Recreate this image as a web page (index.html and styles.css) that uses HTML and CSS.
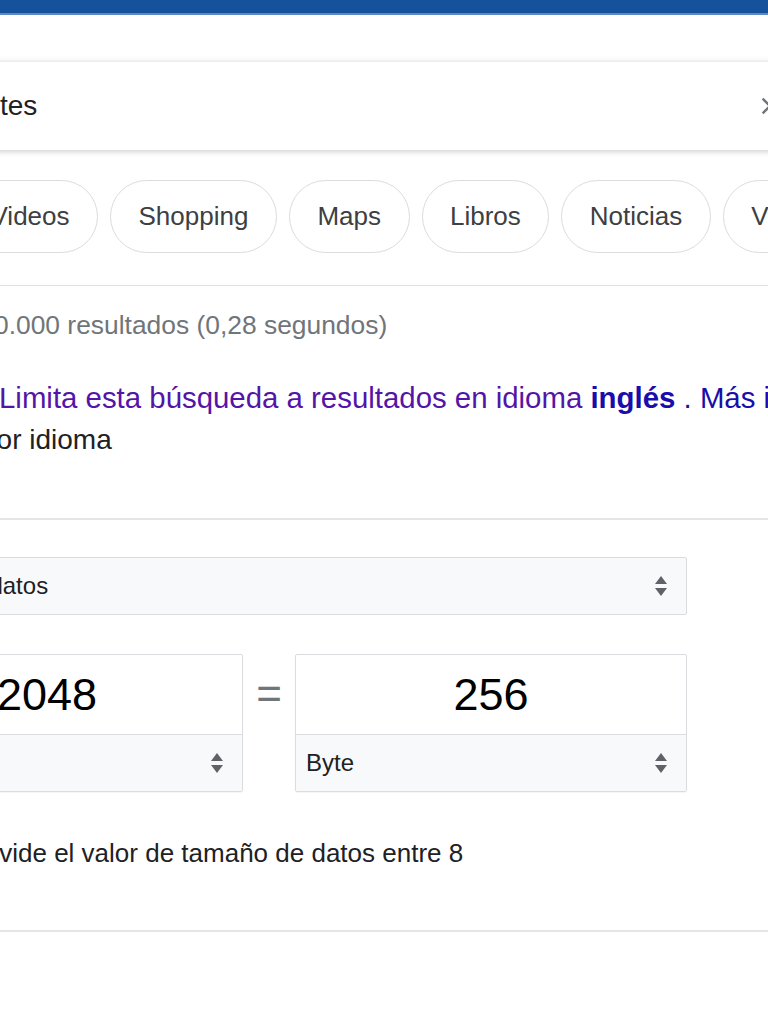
FILE: index.html
```html
<!DOCTYPE html>
<html lang="es">
<head>
<meta charset="utf-8">
<title>bits a bytes</title>
<link rel="stylesheet" href="styles.css">
</head>
<body>
<div class="topbar"></div>

<div class="search">
  <span class="query">tes</span>
  <svg class="clear" width="28" height="28" viewBox="0 0 24 24"><path d="M19 6.41 17.59 5 12 10.59 6.41 5 5 6.41 10.59 12 5 17.59 6.41 19 12 13.41 17.59 19 19 17.59 13.41 12z" fill="#70757a"/></svg>
</div>

<div class="chips">
  <span class="chip">Videos</span>
  <span class="chip">Shopping</span>
  <span class="chip">Maps</span>
  <span class="chip">Libros</span>
  <span class="chip">Noticias</span>
  <span class="chip">Vuelos</span>
</div>

<div class="rule thin"></div>

<div class="stats">0.000 resultados (0,28 segundos)</div>

<div class="suggest">
  <div class="line1"><a class="visited" href="#">Limita esta búsqueda a resultados en idioma</a> <a class="link" href="#"><b>inglés</b> . Más información sobre el filtrado</a></div>
  <div class="line2">por idioma</div>
</div>

<div class="rule"></div>

<div class="converter">
  <div class="select wide">
    <span>Tamaño de datos</span>
    <svg class="arrows" width="14" height="22" viewBox="0 0 14 22"><path d="M1 9 7 1l6 8z M1 13h12l-6 8z" fill="#5f6368"/></svg>
  </div>
  <div class="pair">
    <div class="box">
      <div class="value">2048</div>
      <div class="select unit">
        <span>Bit</span>
        <svg class="arrows" width="14" height="22" viewBox="0 0 14 22"><path d="M1 9 7 1l6 8z M1 13h12l-6 8z" fill="#5f6368"/></svg>
      </div>
    </div>
    <div class="eq">=</div>
    <div class="box">
      <div class="value">256</div>
      <div class="select unit">
        <span>Byte</span>
        <svg class="arrows" width="14" height="22" viewBox="0 0 14 22"><path d="M1 9 7 1l6 8z M1 13h12l-6 8z" fill="#5f6368"/></svg>
      </div>
    </div>
  </div>
</div>

<div class="formula">divide el valor de tamaño de datos entre 8</div>

<div class="rule"></div>
</body>
</html>
```

FILE: styles.css
```css
html, body {
  margin: 0;
  padding: 0;
  overflow: hidden;
  background: #ffffff;
  font-family: "Liberation Sans", Arial, sans-serif;
  color: #202124;
}

.topbar {
  height: 13px;
  background: #16529b;
  border-bottom: 2px solid #5c88c4;
}

.search {
  margin: 47px -60px 0 -40px;
  padding: 0 44px 0 40px;
  height: 88px;
  background: #fff;
  box-shadow: 0 1px 6px rgba(32, 33, 36, 0.26);
  display: flex;
  align-items: center;
  justify-content: space-between;
}

.query {
  font-size: 28px;
  color: #202124;
}

.chips {
  margin: 30px 0 0 -38px;
  display: flex;
  gap: 12px;
  white-space: nowrap;
}

.chip {
  flex: none;
  height: 73px;
  box-sizing: border-box;
  padding: 0 27.5px;
  border: 1px solid #dadce0;
  border-radius: 37px;
  display: flex;
  align-items: center;
  font-size: 26px;
  color: #3c4043;
}

.rule {
  height: 2px;
  background: #e4e5e8;
  margin-top: 57px;
}

.rule.thin {
  margin-top: 32px;
  height: 1px;
  background: #e0e1e4;
}

.stats {
  margin: 19px 0 0 -6px;
  line-height: 40px;
  font-size: 26.4px;
  color: #70757a;
  white-space: nowrap;
}

.suggest {
  margin-top: 32px;
  font-size: 28px;
  line-height: 42px;
  white-space: nowrap;
}

.line1 {
  margin-left: -1px;
  font-size: 29.4px;
}

.line2 {
  margin-left: -19px;
  color: #202124;
}

.suggest a {
  text-decoration: none;
}

.visited {
  color: #5514a8;
}

.link {
  color: #1a0dab;
}

.link b {
  color: #1a0dab;
}

.converter {
  margin: 37px 0 0 -149px;
  width: 836px;
}

.select {
  box-sizing: border-box;
  background: #f8f9fa;
  border: 1px solid #dadce0;
  display: flex;
  align-items: center;
  justify-content: space-between;
  font-size: 24px;
  color: #202124;
  padding: 0 18px 0 12px;
}

.select.wide {
  height: 58px;
  border-radius: 2px;
}

.pair {
  margin-top: 39px;
  display: flex;
  align-items: flex-start;
}

.box {
  width: 392px;
  height: 138px;
  box-sizing: border-box;
  border: 1px solid #dadce0;
  border-radius: 2px;
  display: flex;
  flex-direction: column;
  box-shadow: 0 1px 1px rgba(0, 0, 0, 0.04);
}

.value {
  height: 79px;
  display: flex;
  align-items: center;
  justify-content: center;
  font-size: 45px;
  color: #000;
}

.select.unit {
  flex: 1;
  border: none;
  border-top: 1px solid #dadce0;
  padding-left: 10px;
}

.eq {
  width: 52px;
  height: 80px;
  display: flex;
  align-items: center;
  justify-content: center;
  font-size: 44px;
  color: #70757a;
}

.formula {
  margin: 41px 0 0 -21px;
  line-height: 40px;
  font-size: 26px;
  color: #202124;
  white-space: nowrap;
}
```
